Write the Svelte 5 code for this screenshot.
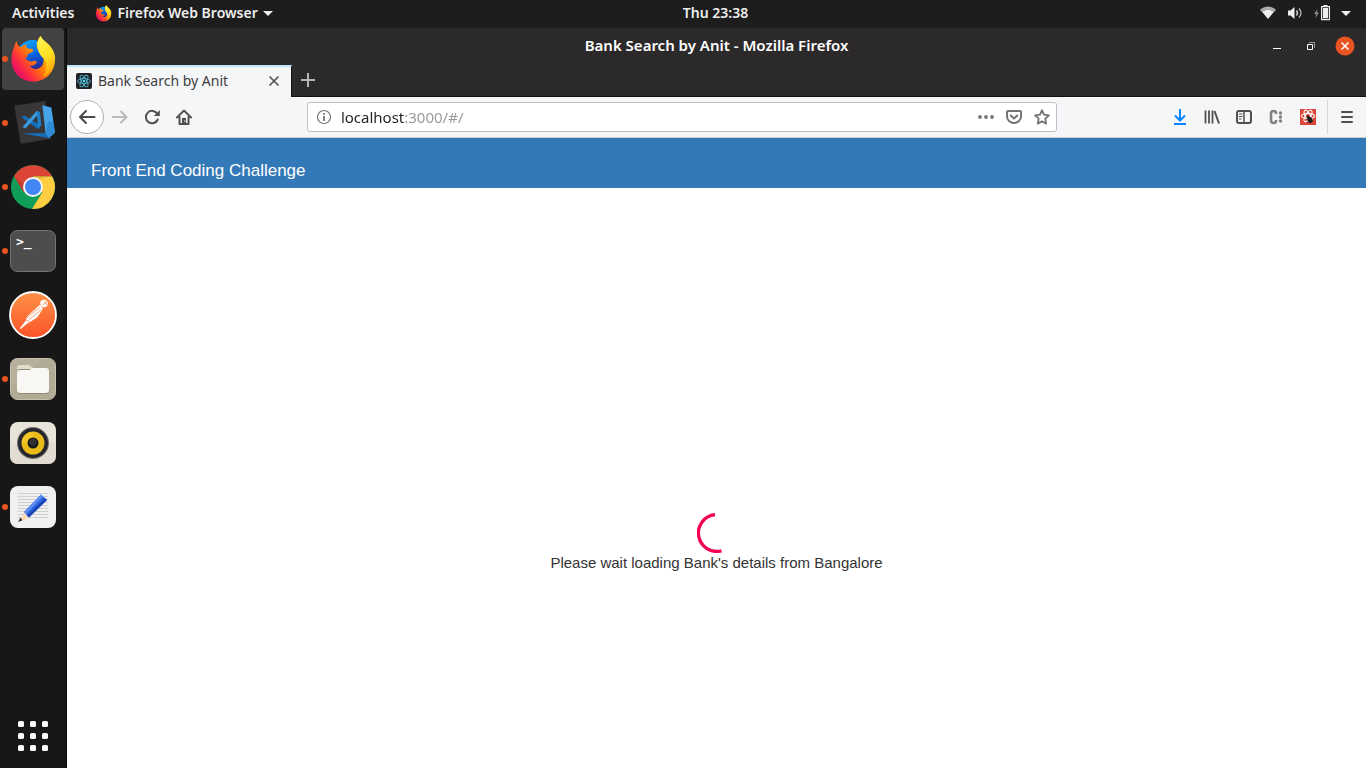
<script>
  let address = $state('localhost:3000/#/');
  const apps = [
    { id: 'firefox', name: 'Firefox Web Browser', running: true },
    { id: 'code', name: 'Visual Studio Code', running: true },
    { id: 'chrome', name: 'Google Chrome', running: true },
    { id: 'terminal', name: 'Terminal', running: true },
    { id: 'postman', name: 'Postman', running: false },
    { id: 'files', name: 'Files', running: true },
    { id: 'music', name: 'Rhythmbox', running: false },
    { id: 'editor', name: 'Text Editor', running: true }
  ];
  const gridSteps = [0, 12, 24];
</script>

{#snippet firefox(size, key)}
  <svg width={size} height={size} viewBox="0 0 48 48" aria-hidden="true">
    <defs>
      <linearGradient id="{key}-body" x1="0.85" y1="0.15" x2="0.15" y2="0.75">
        <stop offset="0" stop-color="#ffe226" />
        <stop offset="0.3" stop-color="#ffb000" />
        <stop offset="0.55" stop-color="#ff7a0c" />
        <stop offset="0.78" stop-color="#ff3b35" />
        <stop offset="1" stop-color="#f0145e" />
      </linearGradient>
      <linearGradient id="{key}-globe" x1="0.3" y1="0" x2="0.6" y2="1">
        <stop offset="0" stop-color="#0aa5fb" />
        <stop offset="0.5" stop-color="#0860df" />
        <stop offset="1" stop-color="#331b82" />
      </linearGradient>
      <linearGradient id="{key}-flame" x1="0.3" y1="0" x2="0.6" y2="1">
        <stop offset="0" stop-color="#fff44f" />
        <stop offset="0.55" stop-color="#ffdd20" />
        <stop offset="1" stop-color="#ff9a08" />
      </linearGradient>
    </defs>
    <circle cx="23.5" cy="21" r="16" fill="url(#{key}-globe)" />
    <path fill="url(#{key}-body)" d="M8 6C7.800 9 9 11.500 11.500 12.200Q14 9.500 17.500 9.200Q16.500 12 18.500 13.500L23.800 14Q24.500 15.500 23.500 16.800L18.500 19.500Q18.800 22.500 16.200 23.500Q20 27 23 26.500Q27 24.500 27.800 27.500Q25.500 31 20.500 31Q25 36 30.500 33Q35.500 30 34.500 23Q27 15 27.700 8L31.500 1Q33 4.500 38 8Q47 16 46 25A21.500 21.500 0 0 1 2.500 25Q2.500 17 5 12.500Q5.500 8.500 8 6Z" />
    <path fill="url(#{key}-flame)" d="M31.500 1C33 7 46.500 9 45.500 26Q44 37 34 42Q40 31 35 24C28 18 26 7 31.500 1Z" />
  </svg>
{/snippet}

{#snippet appIcon(id)}
  {#if id === 'firefox'}
    {@render firefox(48, 'dock')}
  {:else}
    <svg width="48" height="48" viewBox="0 0 48 48" aria-hidden="true">
      {#if id === 'code'}
        <path fill="#393637" d="M5.300 6.700 36.300 2 41.500 40 11.700 44.700Z" />
        <path fill="#1270bd" d="M13 34.500 36.700 34 40 39Z" />
        <path fill="#47a3e8" d="M33.300 6.300 42.300 8.500 46 33.500 40 39 36.700 34.500Z" />
        <path fill="#207cc8" d="m39 22 5.300 1L46 33.500 40 39 36.700 34.500Z" opacity=".6" />
        <path fill="#1270bd" d="M12.700 18.500 15 16.500 31.700 26.500 29 30Z" />
        <path fill="#3a9be0" d="M27.700 12 31 13.300 16.500 29.500 13.500 28Z" />
        <path fill="#1c80cc" d="M27.700 12 31 13.300 32.300 26.500 29 30Z" />
      {:else if id === 'chrome'}
        <circle cx="24" cy="24" r="22" fill="#109d58" />
        <path fill="#dc4437" d="M5 13A22 22 0 0 1 43.200 13.500H24L14.500 29Z" />
        <path fill="#ffcd41" d="M43.200 13.500A22 22 0 0 1 23 46L33.500 29 24 13.500Z" />
        <path fill="#b83228" d="m5 13 9.500 16 2-7Z" opacity=".55" />
        <path fill="#d7a72d" d="M24 13.500h19.200L31 16Z" opacity=".5" />
        <circle cx="24" cy="24" r="10" fill="#f5f5f5" />
        <circle cx="24" cy="24" r="8" fill="#4285f4" />
      {:else if id === 'terminal'}
        <rect x="1.500" y="3.500" width="45" height="41" rx="7" fill="#4d4d4d" stroke="#747474" />
        <text x="7" y="19" fill="#fff" font-family="DejaVu Sans Mono, monospace" font-size="13" font-weight="700">&gt;_</text>
      {:else if id === 'postman'}
        <defs>
          <linearGradient id="postman-bg" x2="0" y2="1"><stop stop-color="#ff9248" /><stop offset="1" stop-color="#fb5226" /></linearGradient>
        </defs>
        <circle cx="24" cy="24" r="23" fill="url(#postman-bg)" stroke="#fff" stroke-width="1.800" />
        <circle cx="35" cy="12.500" r="3.800" fill="#fff" />
        <path d="m36 10 1.500 4M33.500 14l4-3" stroke="#ff8540" stroke-width=".8" />
        <path fill="#fff" d="m30.800 14 3.200 3.500-5.800 9-5.500 3.500-5 3-6.200 5.200-.5-1.200 5.700-7.200 1.500-4.500Z" />
        <path fill="none" stroke="#fa7c42" stroke-width=".7" d="m18 26.500 13-10M20 28.500l12-9.500M17 29l4 1.500" />
      {:else if id === 'files'}
        <rect x="1.500" y="3.500" width="45" height="41" rx="7" fill="#b5af9b" stroke="#c6c1af" />
        <path fill="#9f9884" d="M2 33 33 4h7Q46 4 46 11v26q0 7-7 7H9q-7 0-7-7Z" opacity=".2" />
        <path fill="#e2dccb" d="M8 13q0-3 3-3h9l4 3v5H8Z" />
        <rect x="8" y="14" width="32" height="25" rx="3" fill="#8f8976" />
        <path fill="#f8f7f3" d="M8 18q0-3 3-3h9q1 0 2-1l1-1h14q3 0 3 3v19q0 3-3 3H11q-3 0-3-3Z" />
      {:else if id === 'music'}
        <rect x="1" y="3" width="46" height="42" rx="8" fill="#e9e4da" />
        <path d="M1 24h46v13q0 8-8 8H9q-8 0-8-8Z" fill="#ded8ce" opacity=".7" />
        <circle cx="24" cy="24" r="16" fill="#72716b" />
        <circle cx="24" cy="24" r="15" fill="#25252d" />
        <circle cx="24" cy="24" r="11.500" fill="#eabb16" />
        <path d="M13 24a11 11 0 0 1 11-11v11Z" fill="#f7d13b" opacity=".5" />
        <circle cx="24" cy="24" r="5.500" fill="#17191b" />
        <circle cx="24" cy="23" r="3.500" fill="#303233" />
      {:else}
        <rect x="1" y="3" width="46" height="42" rx="8" fill="#f0f0f0" />
        <path stroke="#cfcfcf" d="M9 10.500h30M9 13.500h30M9 16.500h30M9 19.500h30M9 22.500h30M9 25.500h30M9 28.500h30M9 31.500h30M9 34.500h30" />
        <path fill="#f8d8b5" d="m15 29 5 6-9 3.500Z" />
        <path fill="#333" d="m11.500 34.500 2 2.800L9 39Z" />
        <path fill="#2e66df" d="M32 11.500 38 17 20 34.500 15 29Z" />
        <path fill="#1944b5" d="m36 15 2 2-18 17.500-2-2Z" />
        <path fill="#5b8cf2" d="m32 11.500 2 2-17 17.500-2-2Z" />
      {/if}
    </svg>
  {/if}
{/snippet}

<div class="desktop">
  <header class="system-bar">
    <div class="bar-start">
      <button>Activities</button>
      <button class="app-menu">
        {@render firefox(17, 'menu')}
        <span>Firefox Web Browser</span>
        <svg width="10" height="5" viewBox="0 0 10 5" aria-hidden="true"><path fill="#eee" d="M0 0h10L5 5Z" /></svg>
      </button>
    </div>
    <time>Thu 23:38</time>
    <button class="status" aria-label="System menu">
      <svg width="16" height="14" viewBox="0 0 16 14" aria-hidden="true"><path fill="#aaa" d="M0 3.500q8-6 16 0L14.500 6Q8 1.500 1.500 6Z" /><path fill="#eee" d="M2 5.800q6-4 12 0L8 13Z" /></svg>
      <svg width="16" height="14" viewBox="0 0 16 14" aria-hidden="true"><path fill="#eee" d="M1 4.500h2.500L7.500 1v12L3.500 9.500H1Z" /><path fill="none" stroke="#ddd" stroke-width="1.300" d="M9.500 4.500q2 2.500 0 5" /><path fill="none" stroke="#bbb" stroke-width="1.300" d="M12 2.500q4 4.500 0 9" /></svg>
      <svg width="16" height="16" viewBox="0 0 16 16" aria-hidden="true"><path fill="#888" d="M3.500 4 0 9h2l-.5 4L5 7.500H3Z" /><path fill="none" stroke="#eee" stroke-width="1.200" d="M7.600 1.600h8v13h-8Z" /><path fill="#eee" d="M9.500 0h4v2h-4ZM9 3h5.200v10.200H9Z" /></svg>
      <svg width="10" height="5" viewBox="0 0 10 5" aria-hidden="true"><path fill="#eee" d="M0 0h10L5 5Z" /></svg>
    </button>
  </header>

  <div class="workspace">
    <nav class="dock" aria-label="Applications">
      {#each apps as app (app.id)}
        <button class="dock-item" class:active={app.id === 'firefox'} class:running={app.running} aria-label={app.name}>
          {@render appIcon(app.id)}
        </button>
      {/each}
      <button class="dock-item show-apps" aria-label="Show Applications">
        <svg width="30" height="30" viewBox="0 0 30 30" aria-hidden="true">
          {#each gridSteps as y}{#each gridSteps as x}<rect {x} {y} width="6" height="6" rx="1.500" fill="#fafafa" />{/each}{/each}
        </svg>
      </button>
    </nav>

    <section class="window">
      <div class="title-bar">
        <span class="window-title">Bank Search by Anit - Mozilla Firefox</span>
        <div class="window-controls">
          <button aria-label="Minimize"><svg width="20" height="20" viewBox="0 0 20 20"><path d="M6 12.500h8" stroke="#fff" /></svg></button>
          <button aria-label="Restore"><svg width="20" height="20" viewBox="0 0 20 20"><path d="M8 6.500h5.500V12" fill="none" stroke="#999" /><path d="M6.500 8.500h5v5h-5Z" fill="none" stroke="#fff" /></svg></button>
          <button aria-label="Close window"><svg width="20" height="20" viewBox="0 0 20 20"><circle cx="10" cy="10" r="9.500" fill="#e95420" /><path d="m6.500 6.500 7 7m0-7-7 7" stroke="#fff" stroke-width="1.500" /></svg></button>
        </div>
      </div>

      <div class="tabs">
        <div class="tab">
          <svg width="16" height="16" viewBox="0 0 16 16" aria-hidden="true"><rect width="16" height="16" rx="2" fill="#202225" /><g fill="none" stroke="#53b5cf" stroke-width=".9"><ellipse cx="8" cy="8" rx="6.500" ry="2.500" /><ellipse cx="8" cy="8" rx="6.500" ry="2.500" transform="rotate(60 8 8)" /><ellipse cx="8" cy="8" rx="6.500" ry="2.500" transform="rotate(120 8 8)" /></g><circle cx="8" cy="8" r="1.300" fill="#61dafb" /></svg>
          <span>Bank Search by Anit</span>
          <button aria-label="Close tab"><svg width="16" height="16" viewBox="0 0 16 16"><path d="m3.500 3.500 9 9m0-9-9 9" stroke="#555" stroke-width="1.700" /></svg></button>
        </div>
        <button class="new-tab" aria-label="New tab"><svg width="16" height="16" viewBox="0 0 16 16"><path d="M8 1v14M1 8h14" stroke="#b5b5b5" stroke-width="2" /></svg></button>
      </div>

      <div class="toolbar">
        <button class="back" aria-label="Back"><svg width="18" height="16" viewBox="0 0 18 16"><path d="M16.500 8H2M8 2 2 8l6 6" fill="none" stroke="#4a4a4b" stroke-width="2" stroke-linejoin="round" stroke-linecap="round" /></svg></button>
        <button class="tool" aria-label="Forward"><svg width="16" height="16" viewBox="0 0 16 16"><path d="M1 8h13M9 2.500 14.500 8 9 13.500" fill="none" stroke="#b9babb" stroke-width="2" stroke-linejoin="round" stroke-linecap="round" /></svg></button>
        <button class="tool" aria-label="Reload"><svg width="16" height="16" viewBox="0 0 16 16"><path d="M13.300 4.700A6.200 6.200 0 1 0 13.800 10.500" fill="none" stroke="#505051" stroke-width="2" stroke-linecap="round" /><path d="M15.800 1v6h-6Z" fill="#505051" /></svg></button>
        <button class="tool" aria-label="Home"><svg width="16" height="16" viewBox="0 0 16 16"><path d="M1 8.500 8 1.500l7 7M3.500 8v7h9V8" fill="none" stroke="#505051" stroke-width="2" stroke-linecap="round" stroke-linejoin="round" /><path d="M6 9h4v6H6Z" fill="#505051" /><circle cx="8.800" cy="12" r=".7" fill="#f5f6f7" /></svg></button>
        <span class="spring"></span>
        <div class="address">
          <button aria-label="Site information"><svg width="16" height="16" viewBox="0 0 16 16"><circle cx="8" cy="8" r="6.500" fill="none" stroke="#737373" stroke-width="1.200" /><path d="M8 7v5M8 4v1.800" stroke="#737373" stroke-width="1.800" /></svg></button>
          <input type="text" aria-label="Address" bind:value={address} spellcheck="false" />
          <button aria-label="Page actions"><svg width="16" height="16" viewBox="0 0 16 16" fill="#747474"><circle cx="2" cy="8" r="1.900" /><circle cx="8" cy="8" r="1.900" /><circle cx="14" cy="8" r="1.900" /></svg></button>
          <button aria-label="Save to Pocket"><svg width="16" height="16" viewBox="0 0 16 16" fill="none" stroke="#747474" stroke-width="2" stroke-linecap="round" stroke-linejoin="round"><path d="M2 2h12q1 0 1 1v4.500a7 6.500 0 0 1-14 0V3q0-1 1-1Z" /><path d="m4.800 6.500 3.200 3 3.200-3" /></svg></button>
          <button aria-label="Bookmark this page"><svg width="16" height="16" viewBox="0 0 16 16"><path d="m8 1.200 2 4.500 4.900.6-3.600 3.300.9 5L8 12.200l-4.200 2.400.9-5L1.100 6.300 6 5.700Z" fill="none" stroke="#747474" stroke-width="1.800" stroke-linejoin="round" /></svg></button>
        </div>
        <span class="spring"></span>
        <button class="tool" aria-label="Downloads"><svg width="16" height="16" viewBox="0 0 16 16" fill="none" stroke="#0a84ff" stroke-width="2"><path d="M8 0v11M3 6.500l5 5 5-5M2 15h12" stroke-linejoin="round" /></svg></button>
        <button class="tool" aria-label="Library"><svg width="16" height="16" viewBox="0 0 16 16" fill="none" stroke="#505051" stroke-width="2"><path d="M1.500 1.500v13M5 1.500v13M8.500 1.500v13" stroke-width="1.800" /><path d="m10.500 2 4.500 12.500" /></svg></button>
        <button class="tool" aria-label="Sidebars"><svg width="16" height="16" viewBox="0 0 16 16" fill="none" stroke="#505051"><rect x="1" y="2" width="14" height="12" rx="2" stroke-width="2" /><path d="M8 2v12" stroke-width="1.500" /><path d="M3 5h3.500M3 7.500h3.500M3 10h2.500" /></svg></button>
        <button class="tool" aria-label="Cookie manager"><svg width="16" height="16" viewBox="0 0 16 16"><path d="M8 5V4q0-2-2.500-2T3 4.500v7q0 2.500 2.500 2.500T8 12v-1" fill="none" stroke="#828283" stroke-width="2.600" /><g fill="#828283"><circle cx="12.500" cy="4" r="1.700" /><circle cx="12.500" cy="8" r="1.700" /><circle cx="12.500" cy="12" r="1.700" /></g></svg></button>
        <button class="tool" aria-label="React Developer Tools"><svg width="16" height="16" viewBox="0 0 16 16"><rect width="16" height="16" fill="#db4637" /><g fill="none" stroke="#fff" stroke-width="1.100"><ellipse cx="8" cy="7" rx="6.500" ry="2.500" /><ellipse cx="8" cy="7" rx="6.500" ry="2.500" transform="rotate(60 8 7)" /><ellipse cx="8" cy="7" rx="6.500" ry="2.500" transform="rotate(120 8 7)" /></g><ellipse cx="10" cy="11" rx="2.500" ry="3.200" fill="#211d1c" transform="rotate(-30 10 11)" /><circle cx="8" cy="8" r="1.500" fill="#211d1c" /><path d="m6.500 10.500 6 1m-5 2 4-5" stroke="#211d1c" stroke-width=".8" /></svg></button>
        <span class="divider"></span>
        <button class="tool" aria-label="Open menu"><svg width="16" height="16" viewBox="0 0 16 16"><path d="M3 3h10M3 8h10M3 13h10" stroke="#505051" stroke-width="2" stroke-linecap="round" /></svg></button>
      </div>

      <main>
        <header class="page-header"><h1>Front End Coding Challenge</h1></header>
        <div class="loading" role="status">
          <svg width="40" height="40" viewBox="0 0 40 40" aria-hidden="true"><path d="M18 1.700A18.400 18.400 0 1 0 24.500 37.800" fill="none" stroke="#f50057" stroke-width="3.300" /></svg>
          <p>Please wait loading Bank's details from Bangalore</p>
        </div>
      </main>
    </section>
  </div>
</div>

<style>
  :global(body) { margin: 0; }
  .desktop { display: flex; flex-direction: column; min-height: 100vh; font-family: "Noto Sans", sans-serif; font-size: 14px; color: #eee; background: #171717; }
  button { display: flex; align-items: center; justify-content: center; padding: 0; border: 0; background: none; color: inherit; font: inherit; }
  svg { display: block; flex: none; }

  .system-bar { display: grid; grid-template-columns: 1fr auto 1fr; align-items: center; height: 28px; padding: 0 15px 2px 80px; box-sizing: border-box; background: #1d1d1d; font-weight: 600; line-height: 18px; }
  .bar-start { display: flex; gap: 21px; margin-left: -68px; }
  .system-bar button { height: 26px; }
  .app-menu { gap: 5px; }
  .status { gap: 11px; justify-self: end; }

  .workspace { display: flex; flex: 1; }
  .dock { display: flex; flex-direction: column; gap: 2px; width: 67px; padding: 0 3px 1px 2px; box-sizing: border-box; border-right: 1px solid #080808; background: #171717; }
  .dock-item { position: relative; width: 62px; height: 62px; border-radius: 4px; }
  .active { background: #424242; }
  .running::before { content: ""; position: absolute; left: 0; top: 28px; width: 6px; height: 6px; border-radius: 50%; background: #e95420; }
  .show-apps { margin-top: auto; }

  .window { display: flex; flex: 1; flex-direction: column; min-width: 0; }
  .title-bar { display: grid; grid-template-columns: 1fr auto 1fr; align-items: center; height: 37px; background: #2c292a; }
  .window-title { grid-column: 2; padding-bottom: 3px; font-size: 15px; font-weight: 600; color: #fff; }
  .window-controls { display: flex; gap: 14px; justify-self: end; margin-right: 11px; padding-bottom: 1px; }

  .tabs { display: flex; height: 32px; box-sizing: border-box; background: #2c292a; }
  .tab { display: flex; align-items: center; width: 225px; padding: 0 9px 2px; box-sizing: border-box; gap: 6px; border-top: 2px solid #bce9fa; border-right: 1px solid #111; background: #f5f6f7; color: #3e3e40; }
  .tab span { padding-bottom: 2px; }
  .tab button { margin-left: auto; }
  .new-tab { flex: none; width: 32px; padding-bottom: 2px; border-bottom: 1px solid #111; }
  .tabs::after { content: ""; flex: 1; border-bottom: 1px solid #111; }

  .toolbar { display: flex; align-items: center; height: 41px; padding: 0 3px; box-sizing: border-box; border-bottom: 1px solid #ccc; background: #f5f6f7; }
  .back { width: 34px; height: 34px; border: 1px solid #b1b1b3; border-radius: 50%; background: #fff; box-sizing: border-box; }
  .tool { width: 32px; height: 32px; }
  .spring { flex: 1; }
  .address { display: flex; flex: 7; align-items: center; gap: 12px; height: 30px; min-width: 0; margin: 0 2px; padding: 0 6px 0 8px; box-sizing: border-box; border: 1px solid #bebfc4; border-radius: 3px; background: #fff; }
  .address button { flex: none; }
  .address input { flex: 1; min-width: 0; margin-left: -3px; padding: 0; border: 0; outline: 0; font: inherit; font-size: 15px; color: transparent; background: linear-gradient(90deg, #222 63px, #979797 63px); background-clip: text; -webkit-background-clip: text; }
  .divider { width: 1px; height: 34px; margin: 0 3px; background: #d8d9da; }

  main { flex: 1; background: #fff; color: #333; font-family: "Liberation Sans", Arial, sans-serif; }
  .page-header { height: 50px; padding: 23px 24px 0; box-sizing: border-box; background: #3379b7; color: #fff; }
  h1 { margin: 0; font-size: 17px; line-height: 20px; font-weight: 400; }
  .loading { display: flex; flex-direction: column; align-items: center; padding-top: 325px; font-size: 15px; line-height: 20px; }
  p { margin: 0; }
</style>
